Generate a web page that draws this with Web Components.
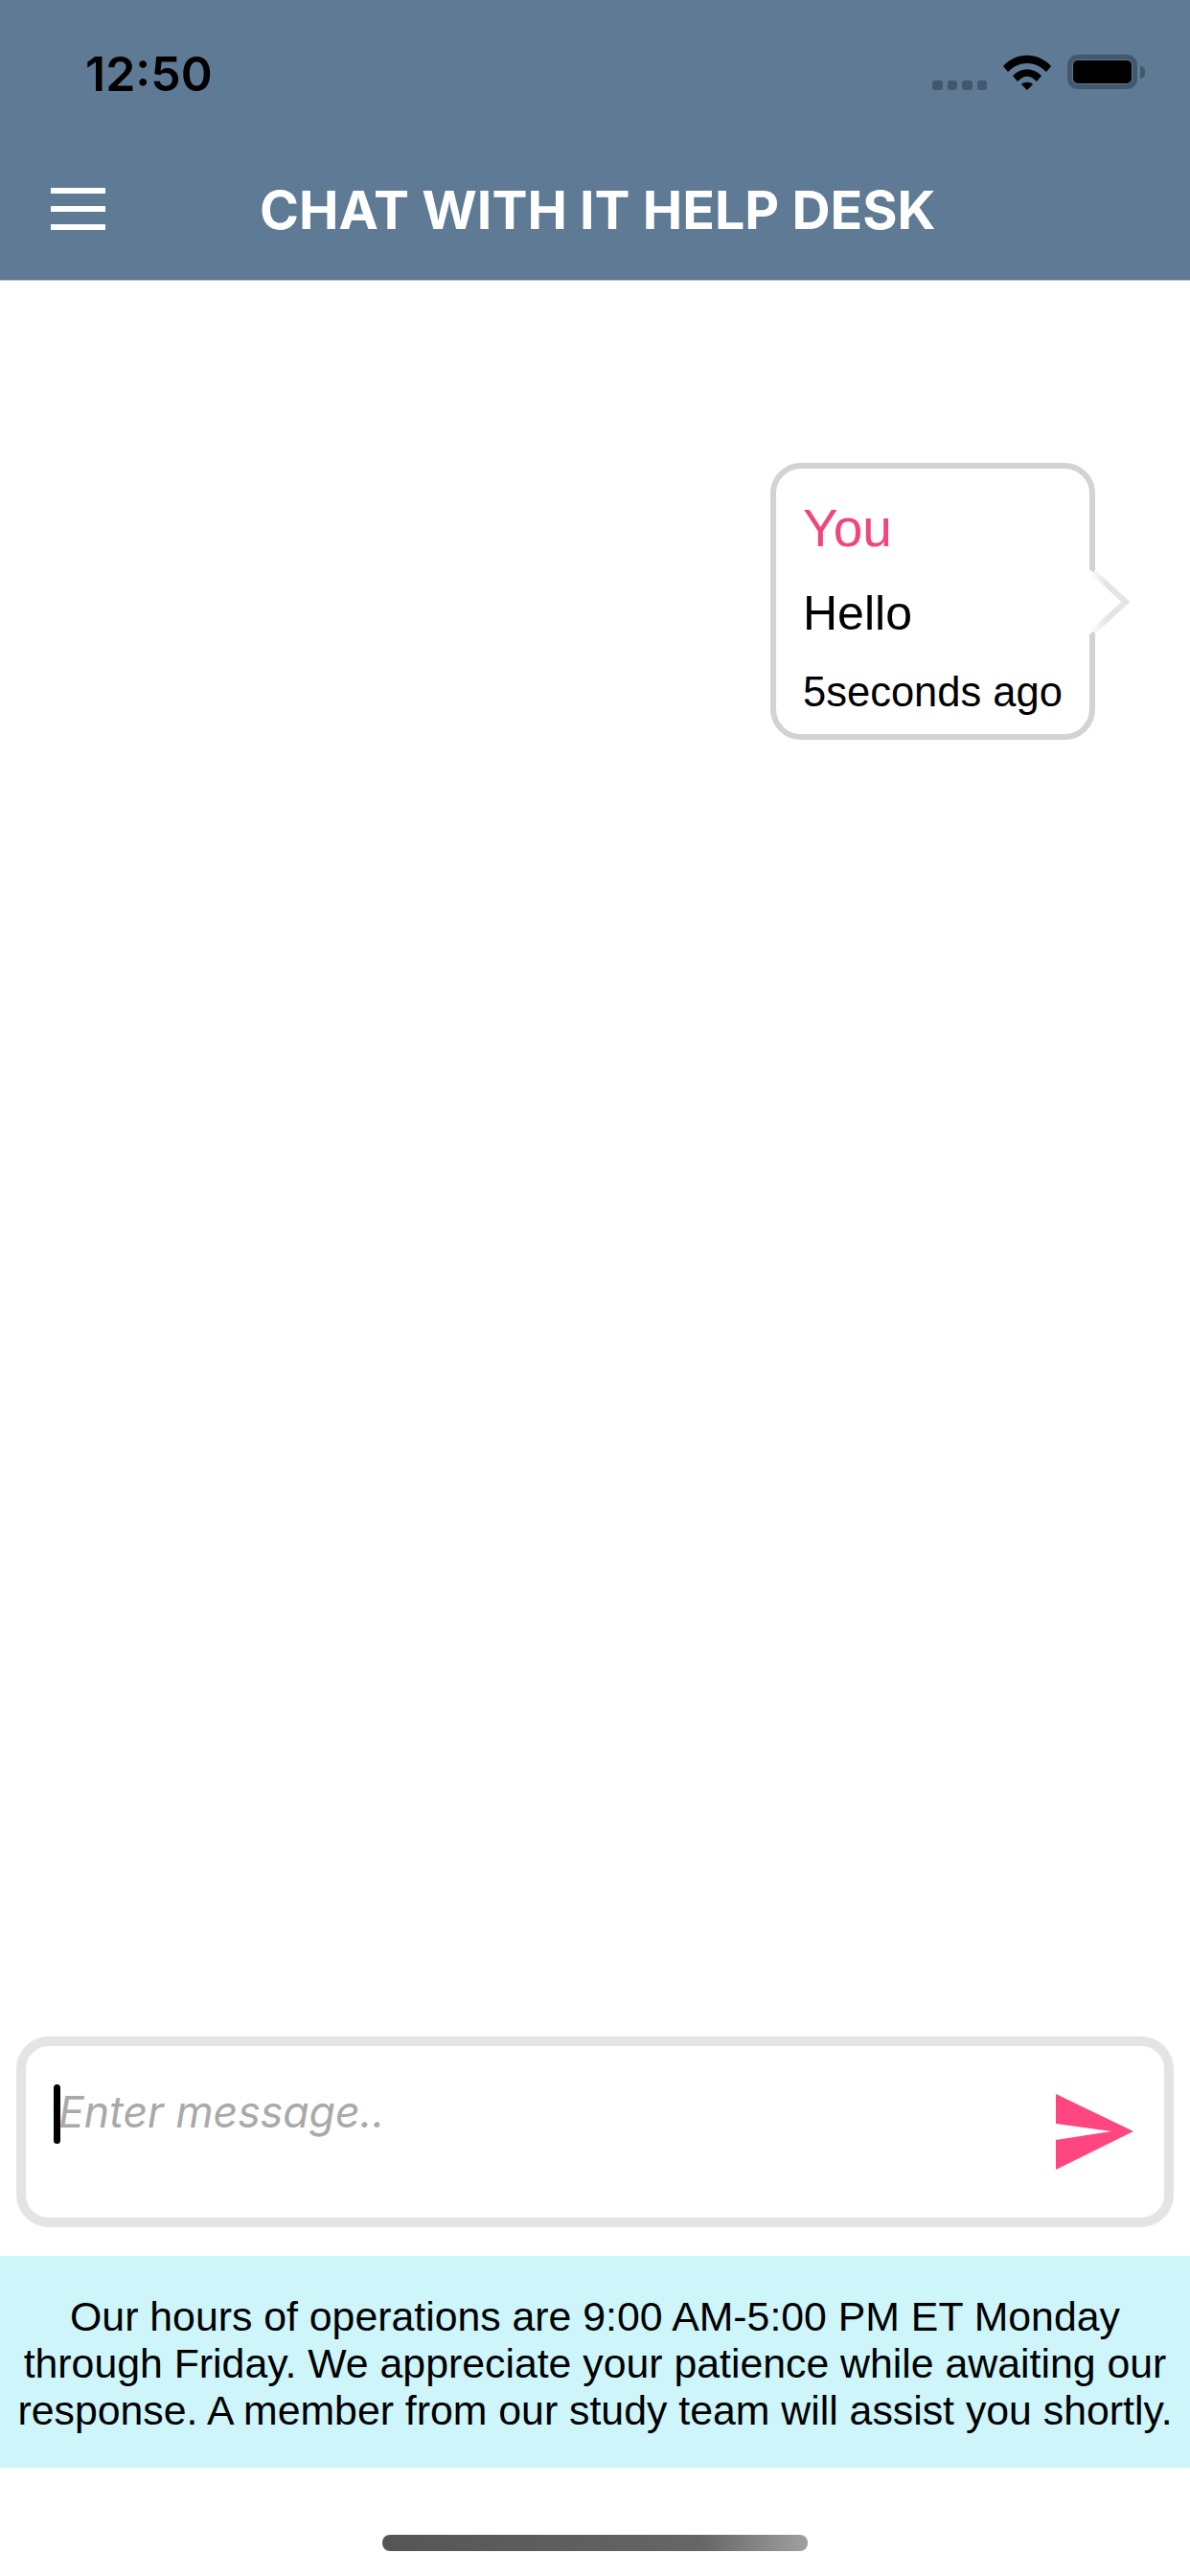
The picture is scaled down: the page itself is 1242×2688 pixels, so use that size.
<!DOCTYPE html>
<html>
<head>
<meta charset="utf-8">
<title>Chat with IT Help Desk</title>
<style>
    html, body { margin: 0; padding: 0; background: #fff; }
    body { font-family: "Liberation Sans", Arial, sans-serif; }
</style>
</head>
<body>
<chat-app>
    <app-header slot="header" title="CHAT WITH IT HELP DESK" time="12:50"></app-header>
    <chat-bubble slot="messages" sender="You" time="5seconds ago">Hello</chat-bubble>
    <message-input slot="composer" placeholder="Enter message.."></message-input>
    <hours-notice slot="notice">Our hours of operations are 9:00 AM-5:00 PM ET Monday through Friday. We appreciate your patience while awaiting our response. A member from our study team will assist you shortly.</hours-notice>
    <home-indicator slot="home"></home-indicator>
</chat-app>

<script>
class ChatApp extends HTMLElement {
    constructor() {
        super();
        this.attachShadow({ mode: 'open' });
    }
    connectedCallback() {
        this.shadowRoot.innerHTML = `
            <style>
                :host { display: flex; flex-direction: column; width: 1242px; height: 2688px; overflow: hidden; background: #fff; }
                .messages { flex: 1; display: flex; flex-direction: column; align-items: flex-end; padding: 191px 99px 0 0; }
            </style>
            <slot name="header"></slot>
            <div class="messages"><slot name="messages"></slot></div>
            <slot name="composer"></slot>
            <slot name="notice"></slot>
            <slot name="home"></slot>
        `;
    }
}
customElements.define('chat-app', ChatApp);

class AppHeader extends HTMLElement {
    constructor() {
        super();
        this.attachShadow({ mode: 'open' });
    }
    connectedCallback() {
        this.shadowRoot.innerHTML = `
            <style>
                :host { display: block; height: 292px; background: #5e7a94; box-shadow: 0 1px 0 #b9c6d2; font-family: Inter, "Liberation Sans", sans-serif; }
                .status { display: flex; align-items: flex-start; height: 196px; box-sizing: border-box; padding: 57px 47px 0 89px; }
                .time { font-size: 50px; line-height: 40px; font-weight: 600; color: #000; flex: 1; }
                .icons { display: flex; align-items: flex-start; }
                .dots { display: flex; gap: 5px; margin: 27px 17px 0 0; }
                .dots i { width: 10.5px; height: 10px; border-radius: 3px; background: #41586d; }
                .wifi { display: block; width: 50px; height: 37px; margin-right: 17px; }
                .battery { position: relative; width: 73px; height: 36px; box-sizing: border-box; border: 5px solid #41586d; border-radius: 11px; padding: 1px 1px; }
                .battery b { display: block; height: 100%; background: #000; border-radius: 5px; }
                .nub { width: 5px; height: 13px; margin: 12px 0 0 3px; background: #41586d; border-radius: 0 7px 7px 0; }
                .nav { display: flex; align-items: flex-start; height: 96px; padding-left: 53px; }
                .menu { display: flex; flex-direction: column; gap: 13px; width: 57px; }
                .menu i { display: block; height: 6px; background: #fff; }
                h1 { margin: 1px 0 0 161px; font-size: 55.5px; line-height: 44px; font-weight: 700; color: #fff; white-space: nowrap; }
            </style>
            <div class="status">
                <div class="time">${this.getAttribute('time')}</div>
                <div class="icons">
                    <div class="dots"><i></i><i></i><i></i><i></i></div>
                    <svg class="wifi" viewBox="0 0 50 37">
                        <path d="M0 12 C14 -3 36 -3 50 12 L45 18 C33 6 17 6 5 18 Z" fill="#000"/>
                        <path d="M10 22 C19 13 31 13 40 22 L35 28 C28 21 22 21 15 28 Z" fill="#000"/>
                        <path d="M19 31 C22 28 28 28 31 31 L25 37 Z" fill="#000"/>
                    </svg>
                    <div class="battery"><b></b></div>
                    <div class="nub"></div>
                </div>
            </div>
            <div class="nav">
                <div class="menu"><i></i><i></i><i></i></div>
                <h1>${this.getAttribute('title')}</h1>
            </div>
        `;
    }
}
customElements.define('app-header', AppHeader);

class ChatBubble extends HTMLElement {
    constructor() {
        super();
        this.attachShadow({ mode: 'open' });
    }
    connectedCallback() {
        this.shadowRoot.innerHTML = `
            <style>
                :host { display: block; position: relative; width: 339px; height: 289px; box-sizing: border-box; border: 6px solid #d3d3d3; border-radius: 32px; background: #fff; padding: 0 0 0 28px; color: #000; }
                .sender { font-size: 55px; line-height: 60px; margin-top: 32px; color: #f0457d; }
                .body { font-size: 50px; line-height: 56px; margin-top: 31px; }
                .time { font-size: 43.5px; line-height: 50px; margin-top: 29px; white-space: nowrap; }
                .tail { position: absolute; left: 327px; top: 105px; width: 46px; height: 68px; }
            </style>
            <div class="sender">${this.getAttribute('sender')}</div>
            <div class="body"><slot></slot></div>
            <div class="time">${this.getAttribute('time')}</div>
            <svg class="tail" viewBox="0 0 46 68">
                <defs>
                    <linearGradient id="fade" gradientUnits="userSpaceOnUse" x1="0" x2="18" y1="0" y2="0">
                        <stop offset="0" stop-color="#fff"/>
                        <stop offset="1" stop-color="#e4e4e4"/>
                    </linearGradient>
                </defs>
                <path d="M0 0 L40 34 L0 68 Z" fill="#fff"/>
                <path d="M4 3 L38 34 L4 65" fill="none" stroke="url(#fade)" stroke-width="6"/>
            </svg>
        `;
    }
}
customElements.define('chat-bubble', ChatBubble);

class MessageInput extends HTMLElement {
    constructor() {
        super();
        this.attachShadow({ mode: 'open' });
    }
    connectedCallback() {
        this.shadowRoot.innerHTML = `
            <style>
                :host { display: block; padding: 0 17px 30px; }
                .box { display: flex; justify-content: space-between; box-sizing: border-box; height: 199px; border: 10px solid #e4e4e4; border-radius: 34px; background: #fff; padding: 40px 32px 0 29px; }
                .field { display: flex; align-items: flex-start; }
                .caret { width: 7px; height: 62px; border-radius: 4px; background: #000; }
                .placeholder { margin: 3px 0 0 -2px; font-family: Inter, "Liberation Sans", sans-serif; font-style: italic; font-size: 44.6px; line-height: 52px; color: #a9a9a9; }
                svg { display: block; width: 81px; height: 79px; margin-top: 10px; }
            </style>
            <div class="box">
                <div class="field">
                    <div class="caret"></div>
                    <div class="placeholder">${this.getAttribute('placeholder')}</div>
                </div>
                <svg viewBox="0 0 81 79"><path d="M0 0 L81 39 L0 79 L0 48 L58 39 L0 31 Z" fill="#ff4681"/></svg>
            </div>
        `;
    }
}
customElements.define('message-input', MessageInput);

class HoursNotice extends HTMLElement {
    constructor() {
        super();
        this.attachShadow({ mode: 'open' });
    }
    connectedCallback() {
        this.shadowRoot.innerHTML = `
            <style>
                :host { display: block; box-sizing: border-box; height: 221px; padding: 39px 10px 0; background: #cdf5fa; color: #000; text-align: center; font-size: 42.8px; line-height: 49px; }
            </style>
            <slot></slot>
        `;
    }
}
customElements.define('hours-notice', HoursNotice);

class HomeIndicator extends HTMLElement {
    constructor() {
        super();
        this.attachShadow({ mode: 'open' });
    }
    connectedCallback() {
        this.shadowRoot.innerHTML = `
            <style>
                :host { display: flex; justify-content: center; height: 113px; box-sizing: border-box; padding-top: 70px; }
                .bar { width: 444px; height: 17px; border-radius: 8px; background: linear-gradient(90deg, #555 0%, #666 75%, #a0a0a0 100%); }
            </style>
            <div class="bar"></div>
        `;
    }
}
customElements.define('home-indicator', HomeIndicator);
</script>
</body>
</html>
